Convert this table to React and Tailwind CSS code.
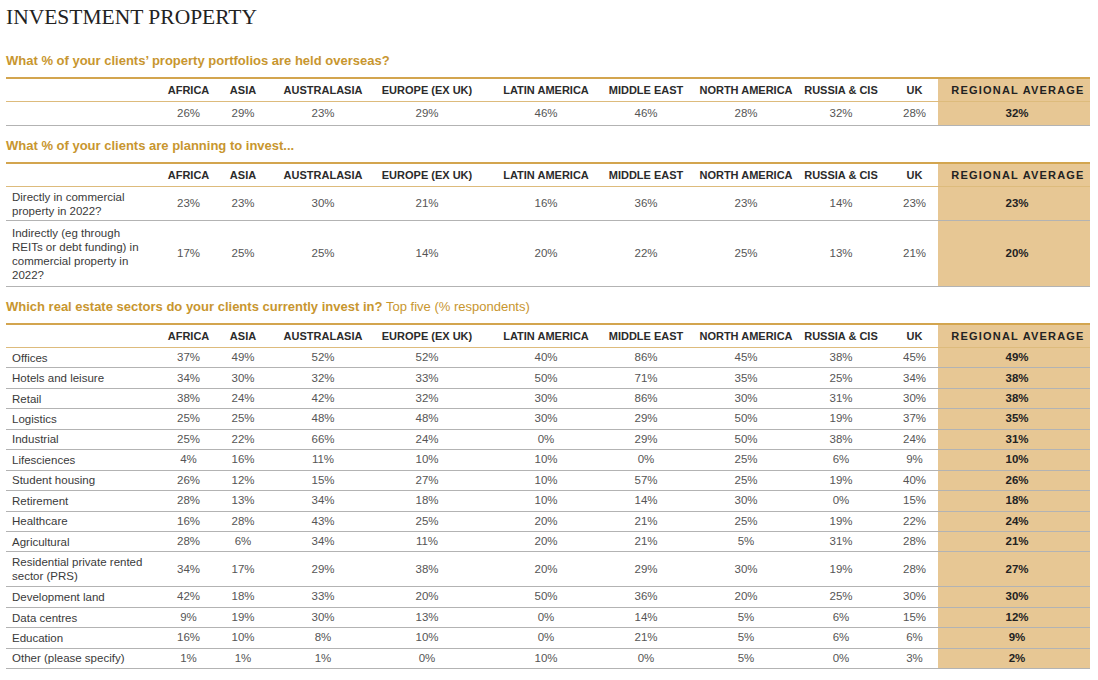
import React from "react";

const cols = [
  { name: "AFRICA", cls: "w-[55px]" },
  { name: "ASIA", cls: "w-[67px] pr-[13px]" },
  { name: "AUSTRALASIA", cls: "w-[92px] pr-[12px]" },
  { name: "EUROPE (EX UK)", cls: "w-[111px] pr-[7px]" },
  { name: "LATIN AMERICA", cls: "w-[110px] pl-[10px]" },
  { name: "MIDDLE EAST", cls: "w-[100px]" },
  { name: "NORTH AMERICA", cls: "w-[99px] pl-[1px]" },
  { name: "RUSSIA & CIS", cls: "w-[84px] pl-[8px]" },
  { name: "UK", cls: "w-[59px] pl-[12px]" },
];

const overseas = [26, 29, 23, 29, 46, 46, 28, 32, 28, 32];

const planning = [
  { label: "Directly in commercial property in 2022?", h: "h-[34px]", v: [23, 23, 30, 21, 16, 36, 23, 14, 23, 23] },
  {
    label: "Indirectly (eg through REITs or debt funding) in commercial property in 2022?",
    h: "h-[66px]",
    v: [17, 25, 25, 14, 20, 22, 25, 13, 21, 20],
  },
];

const sectors = [
  ["Offices", [37, 49, 52, 52, 40, 86, 45, 38, 45, 49]],
  ["Hotels and leisure", [34, 30, 32, 33, 50, 71, 35, 25, 34, 38]],
  ["Retail", [38, 24, 42, 32, 30, 86, 30, 31, 30, 38]],
  ["Logistics", [25, 25, 48, 48, 30, 29, 50, 19, 37, 35]],
  ["Industrial", [25, 22, 66, 24, 0, 29, 50, 38, 24, 31]],
  ["Lifesciences", [4, 16, 11, 10, 10, 0, 25, 6, 9, 10]],
  ["Student housing", [26, 12, 15, 27, 10, 57, 25, 19, 40, 26]],
  ["Retirement", [28, 13, 34, 18, 10, 14, 30, 0, 15, 18]],
  ["Healthcare", [16, 28, 43, 25, 20, 21, 25, 19, 22, 24]],
  ["Agricultural", [28, 6, 34, 11, 20, 21, 5, 31, 28, 21]],
  ["Residential private rented sector (PRS)", [34, 17, 29, 38, 20, 29, 30, 19, 28, 27], true],
  ["Development land", [42, 18, 33, 20, 50, 36, 20, 25, 30, 30]],
  ["Data centres", [9, 19, 30, 13, 0, 14, 5, 6, 15, 12]],
  ["Education", [16, 10, 8, 10, 0, 21, 5, 6, 6, 9]],
  ["Other (please specify)", [1, 1, 1, 0, 10, 0, 5, 0, 3, 2]],
];

function HeaderRow() {
  return (
    <div className="flex h-[25px] border-t-2 border-b border-t-[#d3a54f] border-b-[#ddbb7c]">
      <div className="w-[155px] shrink-0" />
      {cols.map((c) => (
        <div
          key={c.name}
          className={`${c.cls} shrink-0 flex items-center justify-center whitespace-nowrap text-[11px] font-bold text-[#2b2b2b]`}
        >
          {c.name}
        </div>
      ))}
      <div className="w-[152px] shrink-0 pl-[8px] bg-[#e7c794] flex items-center justify-center whitespace-nowrap text-[11px] font-bold tracking-[1.2px] text-[#222]">
        REGIONAL AVERAGE
      </div>
    </div>
  );
}

function DataRow({ label, values, h }) {
  return (
    <div className={`flex ${h} border-b border-[#b3b3b3]`}>
      <div className="w-[155px] shrink-0 pl-[6px] pr-[16px] flex items-center text-[11.5px] leading-[14px] text-[#3a3a3a]">
        {label}
      </div>
      {cols.map((c, i) => (
        <div
          key={c.name}
          className={`${c.cls} shrink-0 flex items-center justify-center text-[11.5px] text-[#555]`}
        >
          {values[i]}%
        </div>
      ))}
      <div className="w-[152px] shrink-0 pl-[6px] bg-[#e7c794] flex items-center justify-center text-[11.5px] font-bold text-[#222]">
        {values[9]}%
      </div>
    </div>
  );
}

function Question({ children, className }) {
  return (
    <div className={`text-[13px] leading-[16px] font-bold text-[#c8962f] ${className}`}>{children}</div>
  );
}

export default function App() {
  return (
    <div
      className="w-[1098px] h-[680px] bg-white px-[6px] overflow-hidden"
      style={{ fontFamily: '"Liberation Sans", Arial, sans-serif' }}
    >
      <h1
        className="pt-[5px] text-[21.5px] leading-[24px] text-[#222]"
        style={{ fontFamily: '"Liberation Serif", "Times New Roman", serif' }}
      >
        INVESTMENT PROPERTY
      </h1>

      <Question className="mt-[24px]">What % of your clients’ property portfolios are held overseas?</Question>
      <div className="mt-[8px] w-[1084px]">
        <HeaderRow />
        <DataRow label="" values={overseas} h="h-[24px]" />
      </div>

      <Question className="mt-[12px]">What % of your clients are planning to invest...</Question>
      <div className="mt-[8px] w-[1084px]">
        <HeaderRow />
        {planning.map((r) => (
          <DataRow key={r.label} label={r.label} values={r.v} h={r.h} />
        ))}
      </div>

      <Question className="mt-[12px]">
        Which real estate sectors do your clients currently invest in?{" "}
        <span className="font-normal">Top five (% respondents)</span>
      </Question>
      <div className="mt-[8px] w-[1084px]">
        <HeaderRow />
        {sectors.map(([label, v, tall]) => (
          <DataRow key={label} label={label} values={v} h={tall ? "h-[35px]" : "h-[20.44px]"} />
        ))}
      </div>
    </div>
  );
}
